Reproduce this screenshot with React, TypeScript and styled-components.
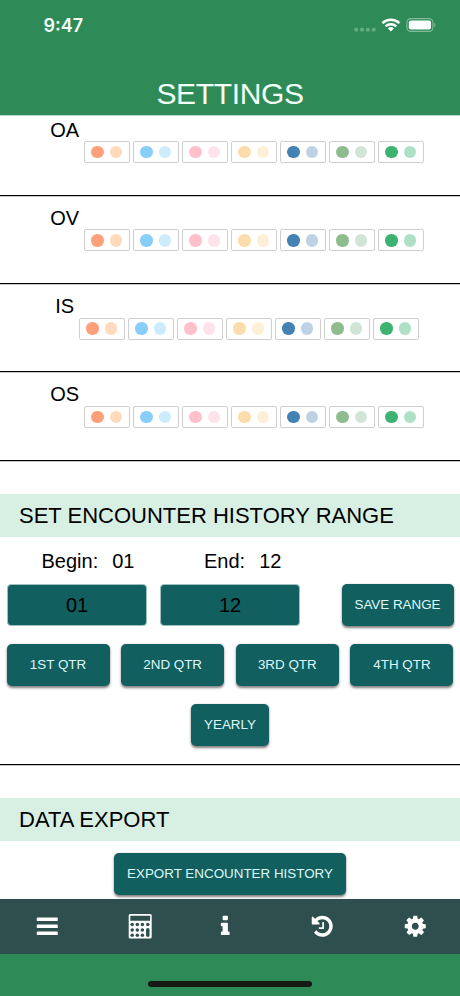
import React from "react";
import styled, { createGlobalStyle } from "styled-components";

const GlobalStyle = createGlobalStyle`
  * { box-sizing: border-box; }
  body { margin: 0; background: #fff; }
`;

const Screen = styled.div`
  display: flex;
  flex-direction: column;
  width: 460px;
  height: 996px;
  overflow: hidden;
  background: #fff;
  color: #000;
  font-family: "Liberation Sans", Helvetica, Arial, sans-serif;
`;

const Header = styled.header`
  flex: none;
  height: 115px;
  display: flex;
  flex-direction: column;
  justify-content: space-between;
  background: #2e8b57;
  color: #f4fff8;
  box-shadow: 0 1px 0 #b9dcc8;
  position: relative;
`;

const StatusBar = styled.div`
  display: flex;
  justify-content: space-between;
  align-items: center;
  height: 20px;
  margin: 15px 23px 0 43.5px;
`;

const Clock = styled.span`
  padding-top: 1px;
  font: 600 18px/20px Inter, sans-serif;
  letter-spacing: 0;
`;

const StatusIcons = styled.svg`
  display: block;
  width: 84px;
  height: 20px;
`;

const Title = styled.h1`
  margin: 0 0 4px;
  font-size: 30px;
  line-height: 34px;
  font-weight: 400;
  letter-spacing: -0.35px;
  text-align: center;
`;

const Content = styled.main`
  flex: 1;
  min-height: 0;
  overflow: hidden;
  display: flex;
  flex-direction: column;
`;

const PaletteList = styled.div`
  flex: none;
  margin-top: -7.5px;
`;

const PaletteRow = styled.div`
  display: flex;
  justify-content: center;
  align-items: flex-start;
  gap: 5px;
  height: 88.25px;
  padding: 11px 0 0 14px;
  border-bottom: 1px solid #000;
  box-shadow: 0 1px 0 #c8c8c8;
`;

const RowLabel = styled.span`
  font-size: 20px;
  line-height: 23px;
`;

const Chips = styled.div`
  display: flex;
  gap: 3.5px;
  margin-top: 22.5px;
`;

const Chip = styled.button`
  display: flex;
  align-items: center;
  gap: 5.8px;
  width: 45.5px;
  height: 22px;
  padding: 0 0 0 6px;
  border: 1.4px solid #cfcfcf;
  border-radius: 2px;
  background: #fff;
`;

const Dot = styled.span<{ $color: string }>`
  flex: none;
  width: 12.5px;
  height: 12.5px;
  border-radius: 50%;
  background: ${(p) => p.$color};
`;

const SectionTitle = styled.h2`
  flex: none;
  height: 43px;
  margin: 33px 0 0;
  padding-left: 19px;
  background: #d8f0e4;
  font-size: 22px;
  line-height: 44px;
  font-weight: 400;
`;

const RangeSection = styled.section`
  flex: none;
  height: 228.5px;
  border-bottom: 1px solid #000;
  box-shadow: 0 1px 0 #c8c8c8;
`;

const RangeLabels = styled.div`
  display: grid;
  grid-template-columns: 162.5px 1fr;
  padding: 13px 0 0 41.5px;
  font-size: 20px;
  line-height: 23px;
`;

const RangeLabel = styled.span`
  display: flex;
  gap: 14px;
`;

const Fields = styled.div`
  display: flex;
  gap: 13px;
  padding: 11.5px 6.5px 0 7px;
`;

const Field = styled.div`
  width: 140px;
  height: 42px;
  border: 1px solid #9fc0c0;
  border-radius: 4px;
  background: #125f60;
  font-size: 20px;
  line-height: 41px;
  text-align: center;
`;

const Button = styled.button<{ $width: number }>`
  flex: none;
  width: ${(p) => p.$width}px;
  height: 42px;
  padding: 0 0 1px;
  border: 0;
  border-radius: 5px;
  background: #125f60;
  color: #def8f8;
  box-shadow: 0 1.5px 2.5px rgba(0, 0, 0, 0.5);
  font: 400 13.4px/16px "Liberation Sans", Helvetica, Arial, sans-serif;
  white-space: nowrap;
`;

const SaveButton = styled(Button)`
  margin-left: auto;
`;

const Quarters = styled.div`
  display: flex;
  justify-content: space-between;
  padding: 18px 6.5px 0;
`;

const Centered = styled.div<{ $top: number }>`
  display: flex;
  justify-content: center;
  padding-top: ${(p) => p.$top}px;
`;

const Nav = styled.nav`
  flex: none;
  height: 55px;
  display: grid;
  grid-template-columns: 95px 91px 78px 117px 68px;
  align-items: center;
  justify-items: center;
  background: #2f4f4f;
`;

const NavIcon = styled.svg`
  display: block;
  width: 24.5px;
  height: 24.5px;
  fill: #fff;
`;

const Footer = styled.footer`
  flex: none;
  height: 42px;
  display: flex;
  justify-content: center;
  align-items: flex-end;
  padding-bottom: 9px;
  background: #2e8b57;
`;

const HomeIndicator = styled.div`
  width: 164px;
  height: 6px;
  border-radius: 3px;
  background: #151a14;
`;

const palettes = [
  ["#ffa07a", "#ffdabc"],
  ["#87cefa", "#cdebfe"],
  ["#ffc0cb", "#ffe2ea"],
  ["#fcdcaa", "#ffefd6"],
  ["#4482b4", "#bed2e6"],
  ["#8fbc8f", "#d0e5d6"],
  ["#3cb371", "#aee0c6"],
];

const HISTORY =
  "M1664 896q0 156-61 298t-164 245-245 164-298 61q-172 0-327-72.5t-264-204.5q-7-10-6.5-22.5t8.5-20.5l137-138q10-9 25-9 16 2 23 12 73 95 179 147t225 52q104 0 198.5-40.5t163.5-109.5 109.5-163.5 40.5-198.5-40.5-198.5-109.5-163.5-163.5-109.5-198.5-40.5q-98 0-188 35.5t-160 101.5l137 138q31 30 14 69-17 40-59 40h-448q-26 0-45-19t-19-45v-448q0-42 40-59 39-17 69 14l130 129q107-101 244.5-156.5t284.5-55.5q156 0 298 61t245 164 164 245 61 298zm-640-288v448q0 14-9 23t-23 9h-320q-14 0-23-9t-9-23v-64q0-14 9-23t23-9h224v-352q0-14 9-23t23-9h64q14 0 23 9t9 23z";
const COG =
  "M1152 896q0-106-75-181t-181-75-181 75-75 181 75 181 181 75 181-75 75-181zm512-109v222q0 12-8 23t-20 13l-185 28q-19 54-39 91 35 50 107 138 10 12 10 25t-9 23q-27 37-99 108t-94 71q-12 0-26-9l-138-108q-44 23-91 38-16 136-29 186-7 28-36 28h-222q-14 0-24.5-8.5t-11.5-21.5l-28-184q-49-16-90-37l-141 107q-10 9-25 9-14 0-25-11-126-114-165-168-7-10-7-23 0-12 8-23 15-21 51-66.5t54-70.5q-27-50-41-99l-183-27q-13-2-21-12.5t-8-23.5v-222q0-12 8-23t19-13l186-28q14-46 39-92-40-57-107-138-10-12-10-24 0-10 9-23 26-36 98.5-107.5t94.5-71.5q13 0 26 10l138 107q44-23 91-38 16-136 29-186 7-28 36-28h222q14 0 24.5 8.5t11.5 21.5l28 184q49 16 90 37l142-107q9-9 24-9 13 0 25 10 129 119 165 170 7 8 7 22 0 12-8 23-15 21-51 66.5t-54 70.5q26 50 41 98l183 28q13 2 21 12.5t8 23.5z";
const INFO =
  "M1216 1344v128q0 26-19 45t-45 19h-512q-26 0-45-19t-19-45v-128q0-26 19-45t45-19h64v-384h-64q-26 0-45-19t-19-45v-128q0-26 19-45t45-19h384q26 0 45 19t19 45v576h64q26 0 45 19t19 45zm-128-1152v192q0 26-19 45t-45 19h-256q-26 0-45-19t-19-45v-192q0-26 19-45t45-19h256q26 0 45 19t19 45z";

function CalculatorIcon() {
  return (
    <NavIcon viewBox="0 0 24.5 24.5">
      <rect x="0.7" y="0" width="23" height="24.5" rx="1.6" />
      <g fill="#2f4f4f">
        <rect x="2.3" y="1.8" width="19.8" height="5" rx="0.4" />
        {[10.6, 15.9, 21.2].map((y) =>
          [4.2, 9.3, 14.4].map((x) => <circle key={`${x}-${y}`} cx={x} cy={y} r="1.75" />)
        )}
        <circle cx="19.8" cy="10.6" r="1.75" />
        <rect x="18.05" y="14.1" width="3.5" height="8.8" rx="1.7" />
      </g>
    </NavIcon>
  );
}

export default function App() {
  return (
    <Screen>
      <GlobalStyle />
      <Header>
        <StatusBar>
          <Clock>9:47</Clock>
          <StatusIcons viewBox="0 0 84 20">
            <g fill="#62ab80">
              {[1.3, 7.2, 13, 18.8].map((x) => (
                <rect key={x} x={x} y="12.8" width="3.8" height="3.6" rx="1.2" />
              ))}
            </g>
            <g fill="none" stroke="#fff" strokeWidth="2.5">
              <path d="M29.4 8.1A12.4 12.4 0 0 1 46.4 8.1" />
              <path d="M32.5 11.4A8 8 0 0 1 43.3 11.4" />
            </g>
            <path d="M37.9 16.4L34.9 13.5A4.3 4.3 0 0 1 40.9 13.5Z" fill="#fff" />
            <rect x="53.9" y="3.6" width="26" height="12.8" rx="3.8" fill="none" stroke="#82bc99" strokeWidth="1.1" />
            <rect x="55.8" y="5.4" width="22.2" height="9.2" rx="2" fill="#fff" />
            <path d="M81.2 8v4.2c1.7-.6 1.7-3.6 0-4.2Z" fill="#82bc99" />
          </StatusIcons>
        </StatusBar>
        <Title>SETTINGS</Title>
      </Header>

      <Content>
        <PaletteList>
          {["OA", "OV", "IS", "OS"].map((label) => (
            <PaletteRow key={label}>
              <RowLabel>{label}</RowLabel>
              <Chips>
                {palettes.map(([strong, soft]) => (
                  <Chip key={strong}>
                    <Dot $color={strong} />
                    <Dot $color={soft} />
                  </Chip>
                ))}
              </Chips>
            </PaletteRow>
          ))}
        </PaletteList>

        <SectionTitle>SET ENCOUNTER HISTORY RANGE</SectionTitle>
        <RangeSection>
          <RangeLabels>
            <RangeLabel><span>Begin:</span><span>01</span></RangeLabel>
            <RangeLabel><span>End:</span><span>12</span></RangeLabel>
          </RangeLabels>
          <Fields>
            <Field>01</Field>
            <Field>12</Field>
            <SaveButton $width={112}>SAVE RANGE</SaveButton>
          </Fields>
          <Quarters>
            {["1ST QTR", "2ND QTR", "3RD QTR", "4TH QTR"].map((q) => (
              <Button key={q} $width={103}>{q}</Button>
            ))}
          </Quarters>
          <Centered $top={18}>
            <Button $width={77.5}>YEARLY</Button>
          </Centered>
        </RangeSection>

        <SectionTitle>DATA EXPORT</SectionTitle>
        <Centered $top={12}>
          <Button $width={232}>EXPORT ENCOUNTER HISTORY</Button>
        </Centered>
      </Content>

      <Nav>
        <NavIcon viewBox="0 0 1792 1792">
          {[256, 768, 1280].map((y) => (
            <rect key={y} x="128" y={y} width="1536" height="256" rx="64" />
          ))}
        </NavIcon>
        <CalculatorIcon />
        <NavIcon viewBox="0 0 1792 1792"><path d={INFO} /></NavIcon>
        <NavIcon viewBox="0 0 1792 1792"><path d={HISTORY} /></NavIcon>
        <NavIcon viewBox="0 0 1792 1792"><path d={COG} /></NavIcon>
      </Nav>
      <Footer>
        <HomeIndicator />
      </Footer>
    </Screen>
  );
}
